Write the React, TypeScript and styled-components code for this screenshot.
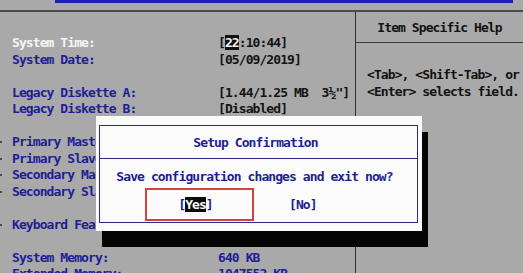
import React from "react";
import styled, {createGlobalStyle} from "styled-components";

const GlobalStyle = createGlobalStyle`
  html, body {
    margin: 0;
    padding: 0;
    background: #a9a9a9;
  }
`

const BLUE = '#1e1e94'

const Screen = styled.div`
  position: relative;
  width: 523px;
  height: 273px;
  overflow: hidden;
  background: #a9a9a9;
  font-family: "DejaVu Sans Mono", "Liberation Mono", monospace;
  font-weight: 700;
  font-size: 13px;
  letter-spacing: -0.92px;
  white-space: pre;
`

const TopStrip = styled.div`
  height: 10px;
  display: flex;
  border-bottom: 2px solid #4c4c4c;
`

const MenuBar = styled.div`
  margin-left: 55px;
  width: 458px;
  height: 3px;
  background: #1f1fae;
`

const Main = styled.div`
  display: grid;
  grid-template-columns: 355px 1fr;
  height: 261px;
`

const Fields = styled.div`
  padding-top: 23px;
  display: flex;
  flex-direction: column;
`

const Row = styled.div`
  display: grid;
  grid-template-columns: 12px 206px 1fr;
  height: 16.5px;
  line-height: 16.5px;
  align-items: center;
`

const Marker = styled.span<{ $on?: boolean }>`
  width: 2px;
  height: 2px;
  background: ${p => p.$on ? '#4a4a4a' : 'transparent'};
`

const Label = styled.span<{ $active?: boolean }>`
  color: ${p => p.$active ? '#f6f6f6' : BLUE};
`

const Value = styled.span<{ $tone?: 'blue' }>`
  color: ${p => p.$tone === 'blue' ? BLUE : '#141414'};
`

const Cursor = styled.span`
  background: #101010;
  color: #f4f4f4;
`

const HelpPanel = styled.div`
  border-left: 1px solid #2e2e2e;
  display: flex;
  flex-direction: column;
`

const HelpHeader = styled.div`
  height: 31px;
  border-bottom: 1px solid #3a3a3a;
  display: flex;
  align-items: center;
  justify-content: center;
  color: #121212;
  padding-top: 1px;
  box-sizing: border-box;
`

const HelpText = styled.div`
  padding: 23px 0 0 11px;
  color: #121212;
  line-height: 17px;
`

const Dialog = styled.div`
  position: absolute;
  left: 96px;
  top: 116px;
  width: 326px;
  height: 115px;
  box-sizing: border-box;
  background: #fbfbfb;
  padding: 9px 4px 8px 3px;
  box-shadow: 6px 16px 0 #050505;
  display: flex;
`

const DialogFrame = styled.div`
  flex: 1;
  border: 1px solid #2c2c86;
  display: flex;
  flex-direction: column;
  color: ${BLUE};
`

const DialogTitle = styled.div`
  height: 32px;
  border-bottom: 1px solid #2c2c86;
  display: flex;
  align-items: center;
  justify-content: center;
  padding-right: 6px;
`

const Message = styled.div`
  text-align: center;
  padding: 9px 8px 0 0;
  height: 17px;
  line-height: 17px;
`

const Buttons = styled.div`
  display: flex;
  align-items: center;
  padding-left: 45px;
  margin-top: 3px;
`

const Choice = styled.div<{ $marked?: boolean }>`
  display: flex;
  align-items: center;
  justify-content: center;
  height: 33px;
  box-sizing: border-box;
  ${p => p.$marked
    ? 'width: 109px; border: 2px solid #d2433f;'
    : 'margin-left: 35px;'}
  padding-right: ${p => p.$marked ? '8px' : '0'};
`

const Selected = styled.span`
  background: #0c0c0c;
  color: #f8f8f8;
`

type Field = { label: string; value?: React.ReactNode; sub?: boolean; active?: boolean; blue?: boolean }

const fields: (Field | null)[] = [
  {label: 'System Time:', value: <>[<Cursor>22</Cursor>:10:44]</>, active: true},
  {label: 'System Date:', value: '[05/09/2019]'},
  null,
  {label: 'Legacy Diskette A:', value: '[1.44/1.25 MB  3½"]'},
  {label: 'Legacy Diskette B:', value: '[Disabled]'},
  null,
  {label: 'Primary Master', sub: true},
  {label: 'Primary Slave', sub: true},
  {label: 'Secondary Master', sub: true},
  {label: 'Secondary Slave', sub: true},
  null,
  {label: 'Keyboard Features', sub: true},
  null,
  {label: 'System Memory:', value: '640 KB', blue: true},
  {label: 'Extended Memory:', value: '1047552 KB', blue: true},
]

const App = () => {
  return (
    <Screen>
      <GlobalStyle/>
      <TopStrip>
        <MenuBar/>
      </TopStrip>
      <Main>
        <Fields>
          {fields.map((f, i) => f ? (
            <Row key={i}>
              <Marker $on={f.sub}/>
              <Label $active={f.active}>{f.label}</Label>
              <Value $tone={f.blue ? 'blue' : undefined}>{f.value}</Value>
            </Row>
          ) : <Row key={i}/>)}
        </Fields>
        <HelpPanel>
          <HelpHeader>Item Specific Help</HelpHeader>
          <HelpText>
            {'<Tab>, <Shift-Tab>, or\n<Enter> selects field.'}
          </HelpText>
        </HelpPanel>
      </Main>
      <Dialog>
        <DialogFrame>
          <DialogTitle>Setup Confirmation</DialogTitle>
          <Message>Save configuration changes and exit now?</Message>
          <Buttons>
            <Choice $marked>[<Selected>Yes</Selected>]</Choice>
            <Choice>[No]</Choice>
          </Buttons>
        </DialogFrame>
      </Dialog>
    </Screen>
  )
}

export default App
